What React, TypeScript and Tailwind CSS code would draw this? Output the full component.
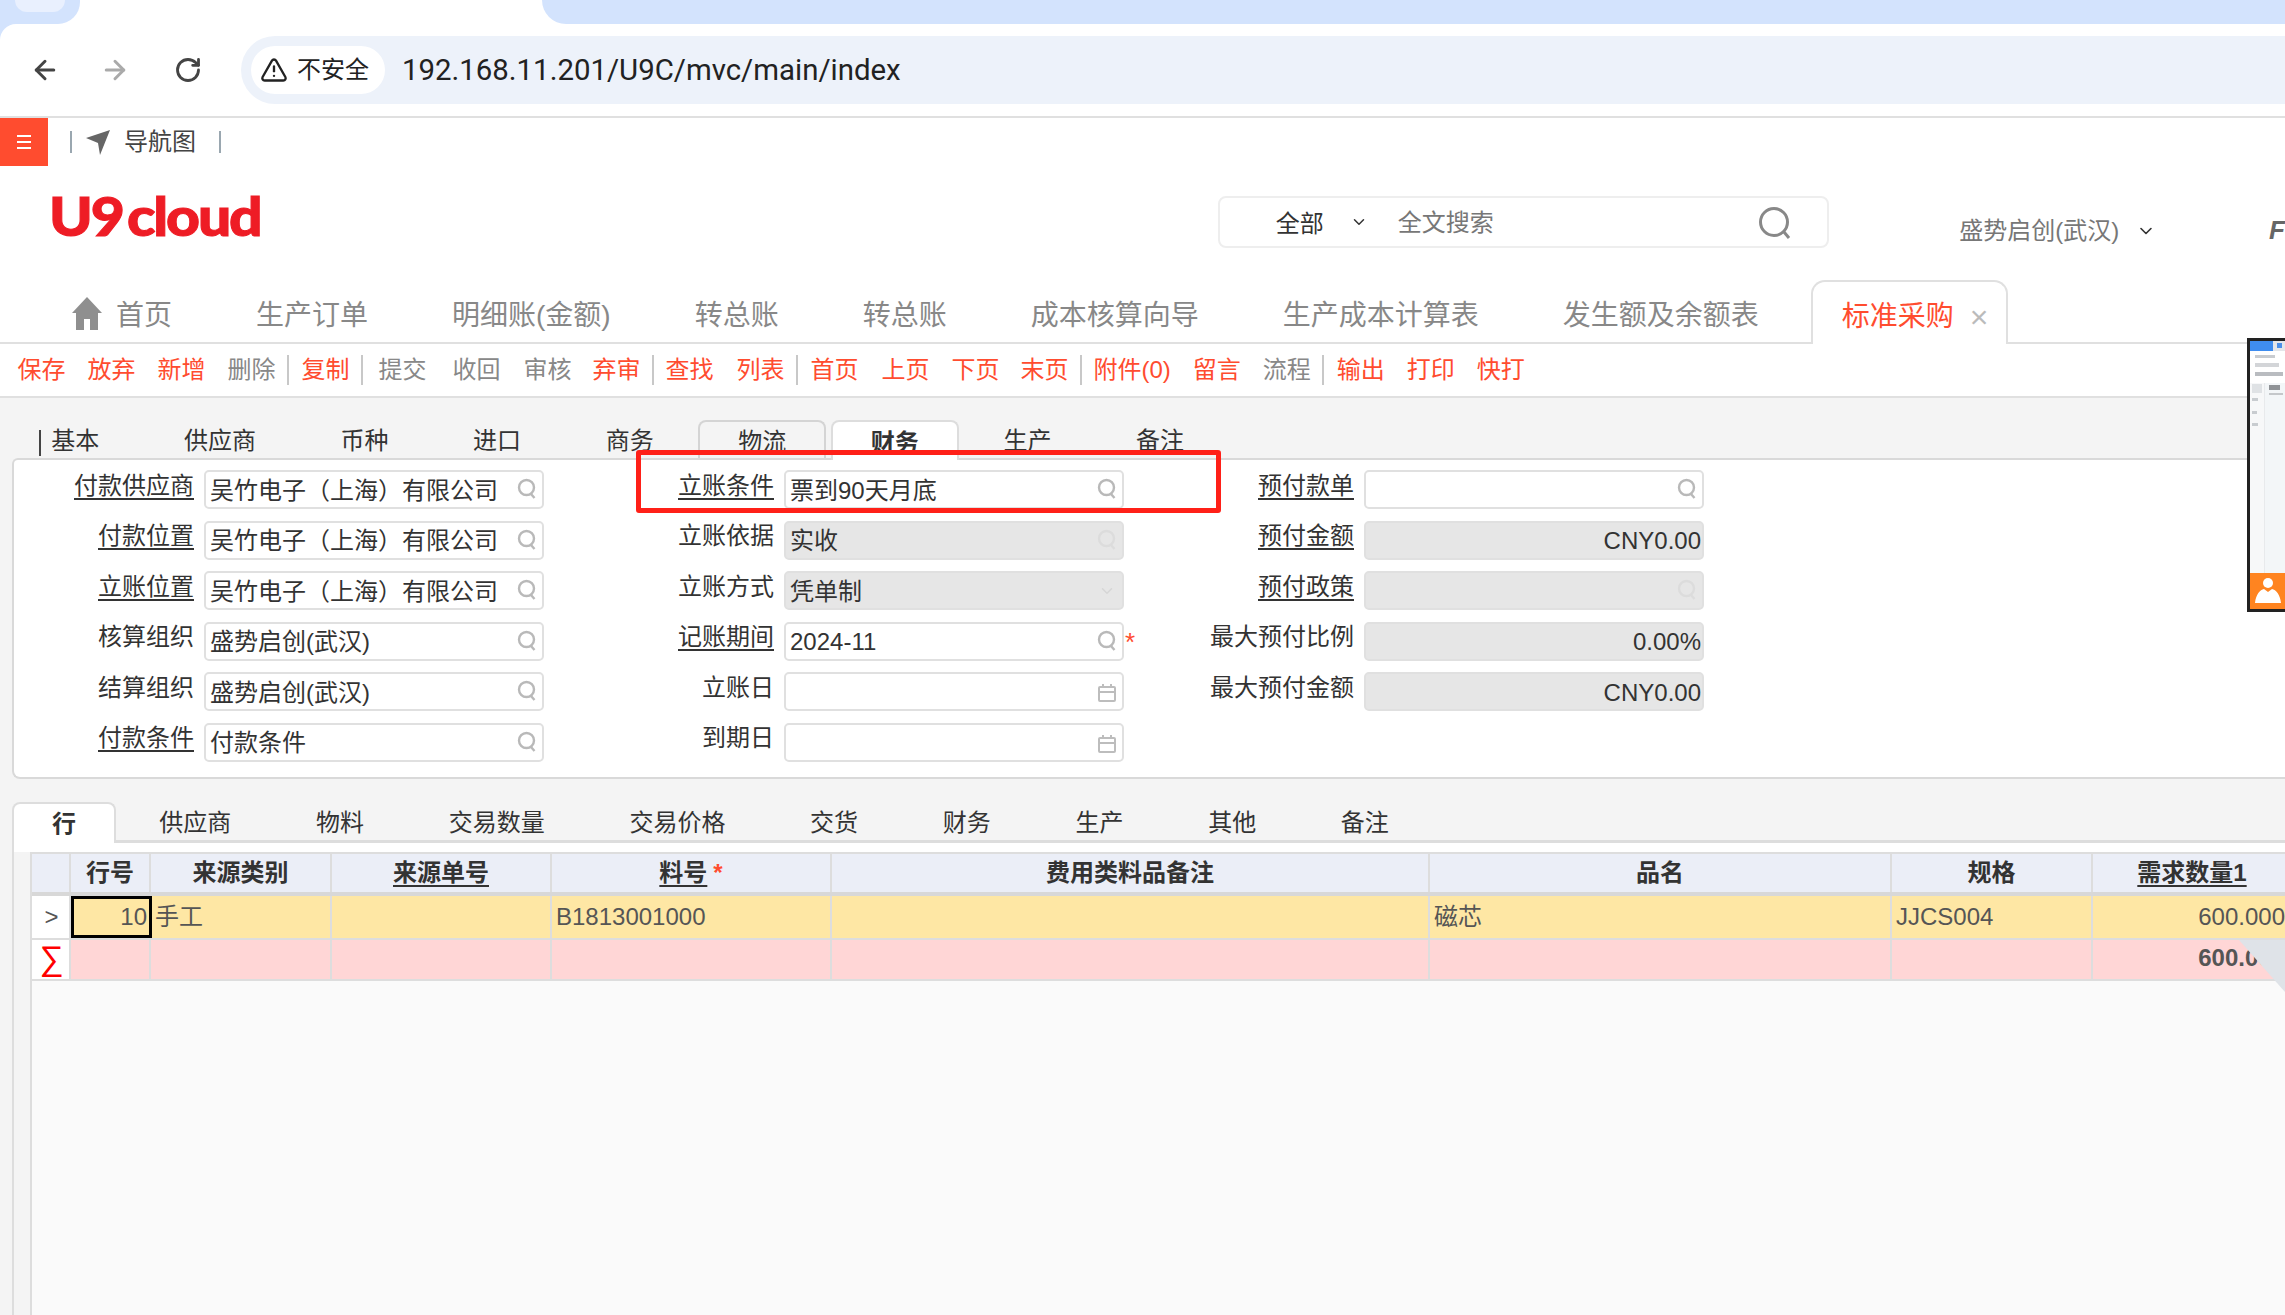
import React from "react";
import { ArrowLeft, ArrowRight, RotateCw, TriangleAlert, ChevronDown } from "lucide-react";

type Field = { label: string; u?: boolean; value?: string; off?: boolean; right?: boolean; icon?: "search" | "cal" | "down" | "none"; star?: boolean };

const wu = "吴竹电子（上海）有限公司";
const sheng = "盛势启创(武汉)";

const fields: Field[] = [
  { label: "付款供应商", u: true, value: wu },
  { label: "付款位置", u: true, value: wu },
  { label: "立账位置", u: true, value: wu },
  { label: "核算组织", value: sheng },
  { label: "结算组织", value: sheng },
  { label: "付款条件", u: true, value: "付款条件" },
  { label: "立账条件", u: true, value: "票到90天月底" },
  { label: "立账依据", value: "实收", off: true },
  { label: "立账方式", value: "凭单制", off: true, icon: "down" },
  { label: "记账期间", u: true, value: "2024-11", star: true },
  { label: "立账日", icon: "cal" },
  { label: "到期日", icon: "cal" },
  { label: "预付款单", u: true },
  { label: "预付金额", u: true, value: "CNY0.00", off: true, right: true, icon: "none" },
  { label: "预付政策", u: true, off: true },
  { label: "最大预付比例", value: "0.00%", off: true, right: true, icon: "none" },
  { label: "最大预付金额", value: "CNY0.00", off: true, right: true, icon: "none" },
];

// label, red?, nudge
const toolbar: (readonly [string, number, string?] | "|")[] = [
  ["保存", 1], ["放弃", 1], ["新增", 1], ["删除", 0], "|",
  ["复制", 1], "|",
  ["提交", 0, "ml-[3px]"], ["收回", 0, "ml-[4px]"], ["审核", 0, "ml-[1px]"], ["弃审", 1, "-ml-[1px]"], "|",
  ["查找", 1, "-ml-[1px]"], ["列表", 1, "ml-[1px]"], "|",
  ["首页", 1], ["上页", 1, "ml-[1px]"], ["下页", 1], ["末页", 1, "-ml-[1px]"], "|",
  ["附件(0)", 1, "-ml-[1px]"], ["留言", 1], ["流程", 0], "|",
  ["输出", 1], ["打印", 1], ["快打", 1],
];

const topTabs = ["生产订单", "明细账(金额)", "转总账", "转总账", "成本核算向导", "生产成本计算表", "发生额及余额表"];
const formTabs = ["基本", "供应商", "币种", "进口", "商务", "物流", "财务", "生产", "备注"];
const lineTabs = ["供应商", "物料", "交易数量", "交易价格", "交货", "财务", "生产", "其他", "备注"];

const cols = "grid grid-cols-[39px_80px_181px_220px_280px_598px_462px_201px_198px]";

function SearchGlyph({ faint }: { faint?: boolean }) {
  return (
    <svg width="20" height="22" viewBox="0 0 20 22" fill="none" className={faint ? "stroke-[#dcdcdc]" : "stroke-[#b9b9b9]"} strokeWidth="2.4">
      <circle cx="9.5" cy="9.5" r="7.5" />
      <path d="M14 16l3.5 4" />
    </svg>
  );
}

function CalGlyph() {
  return (
    <svg width="20" height="20" viewBox="0 0 20 20" fill="none" stroke="#bdbdbd" strokeWidth="2">
      <rect x="2" y="4" width="16" height="14" rx="1" />
      <path d="M2 9h16M6 1v4M14 1v4" />
    </svg>
  );
}

function FieldRow({ f }: { f: Field }) {
  const icon = f.icon ?? "search";
  return (
    <div className="flex items-center h-[39px]">
      <div className="w-[180px] text-right text-[24px] leading-[32px] -mt-[8px] text-[#333]">
        <span className={f.u ? "underline underline-offset-[4px] decoration-2" : ""}>{f.label}</span>
      </div>
      <div
        className={`relative ml-[10px] w-[340px] h-[39px] rounded-[5px] border-2 border-[#e0e0e0] flex items-center px-[4px] text-[24px] text-[#333] ${
          f.off ? "bg-[#e6e6e6]" : "bg-white"
        } ${f.right ? "justify-end pr-[1px]" : ""}`}
      >
        <span className="pt-[2px] whitespace-nowrap">{f.value}</span>
        {icon === "search" && (
          <span className="absolute right-[5px] top-[6px]">
            <SearchGlyph faint={f.off} />
          </span>
        )}
        {icon === "cal" && (
          <span className="absolute right-[5px] top-[9px]">
            <CalGlyph />
          </span>
        )}
        {icon === "down" && <ChevronDown className="absolute right-[6px] top-[9px] w-[18px] h-[18px] text-[#d6d6d6]" />}
        {f.star && <span className="absolute -right-[13px] -top-[1px] text-[26px] text-[#ff4c2f]">*</span>}
      </div>
    </div>
  );
}

function Thumbnail() {
  return (
    <div className="absolute left-[2247px] top-[338px] w-[38px] h-[274px] border-y-[3px] border-l-[3px] border-[#222] bg-white flex flex-col">
      <div className="h-[10px] flex bg-[#e4e6ea]">
        <div className="w-[23px] bg-[#3f8df0]" />
        <div className="ml-[4px] mt-[2px] w-[5px] h-[5px] bg-[#4c8fe8]" />
      </div>
      <div className="h-[32px] px-[5px] pt-[4px] flex flex-col gap-[5px]">
        <div className="w-[20px] h-[3px] bg-[#c9ccd0]" />
        <div className="w-[24px] h-[4px] bg-[#d3d5d8]" />
        <div className="w-[28px] h-[4px] bg-[#b9bcc0]" />
      </div>
      <div className="flex-1 flex bg-[#f3f6f8]">
        <div className="w-[15px] bg-[#f7f8f9] border-r border-[#e8eaec] pt-[1px] px-[2px] flex flex-col gap-[5px]">
          <div className="h-[9px] bg-[#dfe2e5]" />
          <div className="h-[3px] w-[6px] bg-[#c8ccd0]" />
          <div className="mt-[5px] h-[3px] w-[5px] bg-[#c8ccd0]" />
          <div className="mt-[4px] h-[3px] w-[6px] bg-[#c8ccd0]" />
        </div>
        <div className="flex-1 pl-[4px] pt-[2px] flex flex-col gap-[3px]">
          <div className="w-[11px] h-[5px] bg-[#8f9296]" />
          <div className="w-[14px] h-[2px] bg-[#c4c7ca]" />
        </div>
      </div>
      <div className="h-[36px] bg-[#ff8420] flex items-center justify-center">
        <svg width="30" height="30" viewBox="0 0 30 30" fill="white">
          <circle cx="15" cy="7" r="5" />
          <path d="M11 13l4 3 4-3c4 1 8 5 9 14H2c1-9 5-13 9-14z" />
        </svg>
      </div>
    </div>
  );
}

export default function App() {
  return (
    <div className="relative w-[2285px] h-[1315px] overflow-hidden bg-white flex flex-col font-['Liberation_Sans','Noto_Sans_CJK_SC',sans-serif]">
      {/* browser chrome */}
      <div className="h-[24px] flex shrink-0">
        <div className="w-[80px] bg-[#d3e3fd] rounded-br-[22px] pl-[15px]">
          <div className="w-[50px] h-[12px] bg-[#e9f0fe] rounded-b-[12px]" />
        </div>
        <div className="w-[462px]" />
        <div className="flex-1 bg-[#d3e3fd] rounded-bl-[24px]" />
      </div>
      <div className="h-[92px] shrink-0 bg-[#d3e3fd]">
        <div className="h-full bg-white rounded-tl-[16px] flex items-center pl-[30px]">
          <ArrowLeft className="w-[30px] h-[30px] text-[#444]" strokeWidth={2.4} />
          <ArrowRight className="ml-[40px] w-[30px] h-[30px] text-[#aaa]" strokeWidth={2.4} />
          <RotateCw className="ml-[44px] w-[28px] h-[28px] text-[#444]" strokeWidth={2.4} />
          <div className="ml-[39px] flex-1 h-[68px] bg-[#edf2fa] rounded-l-[34px] flex items-center pl-[10px]">
            <div className="h-[48px] w-[134px] bg-white rounded-[24px] flex items-center pl-[9px]">
              <TriangleAlert className="w-[28px] h-[28px] text-[#222]" strokeWidth={2} />
              <span className="ml-[9px] text-[24px] text-[#222]">不安全</span>
            </div>
            <span className="ml-[17px] text-[29.4px] text-[#222] font-['Roboto',sans-serif]">192.168.11.201/U9C/mvc/main/index</span>
          </div>
        </div>
      </div>

      {/* nav strip */}
      <div className="h-[50px] shrink-0 border-t-2 border-[#e0e0e0] flex items-start">
        <div className="w-[48px] h-[48px] bg-[#ff4c2f] flex flex-col items-center justify-center gap-[4px]">
          <div className="w-[14px] h-[2px] bg-white" />
          <div className="w-[14px] h-[2px] bg-white" />
          <div className="w-[14px] h-[2px] bg-white" />
        </div>
        <div className="ml-[22px] mt-[13px] w-[2px] h-[22px] bg-[#9aa7b0]" />
        <svg className="ml-[14px] mt-[11px]" width="24" height="26" viewBox="0 0 24 26" fill="#666">
          <path d="M24 1L0 9l12 5 2 12z" />
        </svg>
        <span className="ml-[14px] mt-[7px] text-[24px] leading-[34px] text-[#444]">导航图</span>
        <div className="ml-[23px] mt-[13px] w-[2px] h-[22px] bg-[#9aa7b0]" />
      </div>

      {/* logo + search */}
      <div className="h-[114px] shrink-0 flex items-start pl-[52px] pt-[30px]">
        <div className="w-[1169px] h-[44px] -mt-[2px] flex items-end leading-[44px] text-[#ee1c25] font-['Lato',sans-serif] font-black text-[54px] tracking-[-2px]">
          <span className="-ml-[3px] origin-left scale-x-[1.09] [-webkit-text-stroke:1px_#ee1c25] whitespace-nowrap">
            U9<span className="ml-[4px]">cloud</span>
          </span>
        </div>
        <div className="w-[613px] h-[52px] border-2 border-[#eeeeee] rounded-[8px] flex items-center pl-[56px] relative">
          <span className="pt-[4px] text-[24px] text-[#333]">全部</span>
          <ChevronDown className="ml-[26px] w-[18px] h-[18px] text-[#333]" />
          <span className="pt-[2px] ml-[30px] text-[24px] text-[#777]">全文搜索</span>
          <svg className="absolute right-[34px] top-[8px]" width="36" height="36" viewBox="0 0 36 36" fill="none" stroke="#888" strokeWidth="3">
            <circle cx="17" cy="16" r="13.5" />
            <path d="M27 26l5 6" />
          </svg>
        </div>
        <span className="ml-[130px] mt-[17px] text-[24px] text-[#777] whitespace-nowrap">{sheng}</span>
        <ChevronDown className="ml-[17px] mt-[25px] w-[20px] h-[20px] text-[#333]" />
        <span className="ml-[113px] mt-[15px] text-[26px] font-bold italic text-[#666]">F</span>
      </div>

      {/* page tabs */}
      <div className="h-[64px] shrink-0 border-b-2 border-[#e0e0e0] flex items-end gap-[84px] pl-[71px] text-[28px] text-[#888]">
        <div className="flex items-center h-[62px] pt-[9px]">
          <svg width="32" height="33" viewBox="0 0 32 33" fill="#8f8f8f" className="-mt-[4px]">
            <path d="M16 0l15 16h-4v17h-8V22h-6v11H5V16H1z" />
          </svg>
          <span className="ml-[13px]">首页</span>
        </div>
        {topTabs.map((t, i) => (
          <div key={i} className="h-[62px] pt-[9px] flex items-center whitespace-nowrap">
            {t}
          </div>
        ))}
        <div className="-ml-[32px] -mb-[2px] h-[64px] w-[197px] pt-[7px] bg-white border-2 border-b-0 border-[#e0e0e0] rounded-t-[14px] flex items-center pl-[29px] text-[#ff4c2f]">
          <span>标准采购</span>
          <span className="ml-[16px] text-[#bbb] text-[32px] leading-none">×</span>
        </div>
      </div>

      {/* action toolbar */}
      <div className="h-[52px] shrink-0 border-b-2 box-content border-[#e0e0e0] flex items-center pl-[6.5px] text-[24px]">
        {toolbar.map((b, i) =>
          b === "|" ? (
            <div key={i} className="w-[2px] h-[30px] mr-[2px] bg-[#c8c8c8]" />
          ) : (
            <span key={i} className={`px-[11px] whitespace-nowrap ${b[1] ? "text-[#ff4c2f]" : "text-[#888]"} ${b[2] ?? ""}`}>
              {b[0]}
            </span>
          ),
        )}
      </div>

      {/* form */}
      <div className="bg-[#f4f4f4] flex-1 flex flex-col min-h-0">
        <div className="h-[60px] shrink-0 flex items-end pl-[9px] text-[24px] text-[#333]">
          {formTabs.map((t) => (
            <div
              key={t}
              className={`relative mx-[2.5px] h-[38px] px-[37.8px] flex items-center rounded-t-[8px] border-2 whitespace-nowrap ${
                t === "财务"
                  ? "font-bold bg-white border-[#dddddd] border-b-0 z-10 -mb-[2px] h-[40px]"
                  : t === "物流"
                    ? "border-[#d4d4d4] border-b-0"
                    : "border-transparent"
              }`}
            >
              {t === "基本" && <span className="absolute left-[25px] top-[8px] w-[2px] h-[26px] bg-[#444]" />}
              <span className="pt-[3px]">{t}</span>
            </div>
          ))}
        </div>
        <div className="ml-[12px] h-[321px] shrink-0 bg-white border-2 border-r-0 border-[#d9d9d9] rounded-tl-[6px] rounded-bl-[8px] pt-[10px]">
          <div className="grid grid-rows-[repeat(6,39px)] grid-flow-col gap-y-[11.6px] auto-cols-[530px] gap-x-[50px]">
            {fields.map((f) => (
              <FieldRow key={f.label} f={f} />
            ))}
          </div>
        </div>

        {/* line tabs */}
        <div className="h-[61px] shrink-0 flex items-end pl-[12px] text-[24px] text-[#333]">
          <div className="h-[41px] px-[38px] mr-[1px] -mb-[3px] z-10 bg-white border-2 border-b-0 border-[#dddddd] rounded-t-[8px] flex items-center font-bold">
            行
          </div>
          {lineTabs.map((t, i) => (
            <div key={i} className="h-[38px] pt-[3px] px-[42.35px] flex items-center whitespace-nowrap">
              {t}
            </div>
          ))}
        </div>

        {/* grid */}
        <div className="ml-[12px] flex-1 border-l-2 border-t-[3px] border-[#dddddd] flex flex-col min-h-0">
          <div className="h-[9px] shrink-0 bg-white" />
          <div className="flex-1 pl-[17px] min-h-0">
            <div className="h-full border-t-2 border-l-2 border-[#dddddd] bg-[#fafafa] -ml-[1px] overflow-hidden text-[24px]">
              <div className={`${cols} h-[38px] w-[2259px] bg-[#ebeef7] border-b-4 border-[#d8d8d8] box-content font-bold text-[#333] text-center`}>
                <div className="border-r-2 border-[#dddddd]" />
                <div className="border-r-2 border-[#dddddd] leading-[38px]">行号</div>
                <div className="border-r-2 border-[#dddddd] leading-[38px]">来源类别</div>
                <div className="border-r-2 border-[#dddddd] leading-[38px]">
                  <span className="underline underline-offset-[4px] decoration-2">来源单号</span>
                </div>
                <div className="border-r-2 border-[#dddddd] leading-[38px]">
                  <span className="underline underline-offset-[4px] decoration-2">料号</span>
                  <span className="ml-[6px] text-[#ff4c2f]">*</span>
                </div>
                <div className="border-r-2 border-[#dddddd] leading-[38px]">费用类料品备注</div>
                <div className="border-r-2 border-[#dddddd] leading-[38px]">品名</div>
                <div className="border-r-2 border-[#dddddd] leading-[38px]">规格</div>
                <div className="leading-[38px]">
                  <span className="underline underline-offset-[4px] decoration-2">需求数量1</span>
                </div>
              </div>
              <div className={`${cols} h-[44px] w-[2259px] bg-[#fee7a4] border-b-2 border-[#dddddd] text-[#555] leading-[42px]`}>
                <div className="bg-white border-r-2 border-[#dddddd] text-center pl-[2px] text-[#555]">&gt;</div>
                <div className="border-[3px] border-black -mr-[1px] text-right pr-[2px] leading-[36px] z-10">10</div>
                <div className="border-r-2 border-[#dddddd] pl-[4px]">手工</div>
                <div className="border-r-2 border-[#dddddd]" />
                <div className="border-r-2 border-[#dddddd] pl-[4px]">B1813001000</div>
                <div className="border-r-2 border-[#dddddd]" />
                <div className="border-r-2 border-[#dddddd] pl-[4px]">磁芯</div>
                <div className="border-r-2 border-[#dddddd] pl-[4px]">JJCS004</div>
                <div className="text-right pr-[6px]">600.000</div>
              </div>
              <div className={`${cols} h-[39px] w-[2259px] bg-[#ffd6d6] border-b-2 border-[#dddddd] box-content font-bold text-[#555] leading-[36px]`}>
                <div className="bg-white border-r-2 border-[#dddddd] text-center pl-[2px] text-[#ff0000] text-[34px] leading-[36px] font-normal">∑</div>
                <div className="border-r-2 border-[#dddddd]" />
                <div className="border-r-2 border-[#dddddd]" />
                <div className="border-r-2 border-[#dddddd]" />
                <div className="border-r-2 border-[#dddddd]" />
                <div className="border-r-2 border-[#dddddd]" />
                <div className="border-r-2 border-[#dddddd]" />
                <div className="border-r-2 border-[#dddddd]" />
                <div className="text-right pr-[6px]">600.000</div>
              </div>
            </div>
          </div>
        </div>
      </div>

      {/* overlays */}
      <div className="absolute left-[636px] top-[450px] w-[585px] h-[63px] border-[5px] border-[#ff2018] rounded-[3px] pointer-events-none z-20" />
      <svg className="absolute left-[2239px] top-[940px] z-20" width="46" height="52" viewBox="0 0 46 52" fill="#dfe3e8">
        <path d="M0 0h46v52z" />
      </svg>
      <Thumbnail />
    </div>
  );
}
